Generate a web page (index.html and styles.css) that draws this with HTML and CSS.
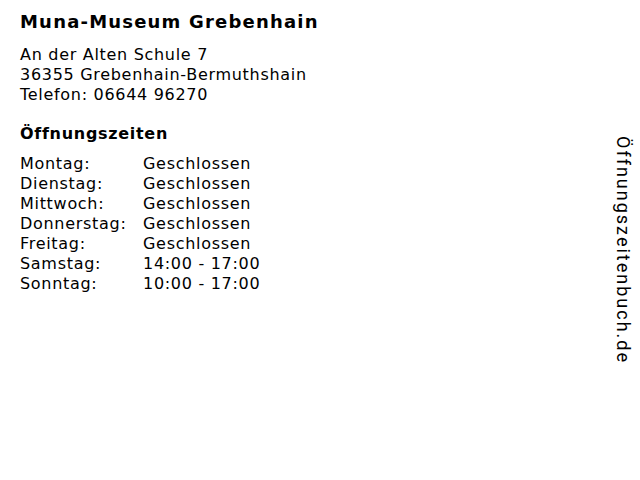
FILE: index.html
```html
<!DOCTYPE html>
<html lang="de">
<head>
<meta charset="utf-8">
<link rel="stylesheet" href="styles.css">
</head>
<body>
<div class="page">
  <main class="content">
    <h1 class="title">Muna-Museum Grebenhain</h1>
    <div class="address">
      <div>An der Alten Schule 7</div>
      <div>36355 Grebenhain-Bermuthshain</div>
      <div>Telefon: 06644 96270</div>
    </div>
    <h2 class="subtitle">Öffnungszeiten</h2>
    <div class="hours">
      <span>Montag:</span><span>Geschlossen</span>
      <span>Dienstag:</span><span>Geschlossen</span>
      <span>Mittwoch:</span><span>Geschlossen</span>
      <span>Donnerstag:</span><span>Geschlossen</span>
      <span>Freitag:</span><span>Geschlossen</span>
      <span>Samstag:</span><span>14:00 - 17:00</span>
      <span>Sonntag:</span><span>10:00 - 17:00</span>
    </div>
  </main>
  <aside class="side">Öffnungszeitenbuch.de</aside>
</div>
</body>
</html>
```

FILE: styles.css
```css
html, body {
  margin: 0;
  padding: 0;
  background: #fff;
}
.page {
  display: flex;
  justify-content: space-between;
  width: 640px;
  height: 480px;
  font-family: "DejaVu Sans", Verdana, sans-serif;
  color: #000;
}
.content {
  padding: 10px 0 0 20px;
}
.title {
  margin: 0;
  font-size: 18px;
  font-weight: bold;
  line-height: 24px;
  letter-spacing: 1.2px;
}
.address {
  margin-top: 11px;
  font-size: 16px;
  line-height: 20px;
  letter-spacing: 0.7px;
}
.subtitle {
  margin: 19px 0 0;
  font-size: 16px;
  font-weight: bold;
  line-height: 20px;
  letter-spacing: 0.7px;
}
.hours {
  margin-top: 10px;
  display: grid;
  grid-template-columns: 123px auto;
  font-size: 16px;
  line-height: 20px;
  letter-spacing: 0.7px;
}
.side {
  writing-mode: vertical-rl;
  font-family: Roboto, sans-serif;
  font-size: 18px;
  letter-spacing: 2px;
  margin-top: 136px;
  margin-right: 6px;
  color: #000;
}
```
